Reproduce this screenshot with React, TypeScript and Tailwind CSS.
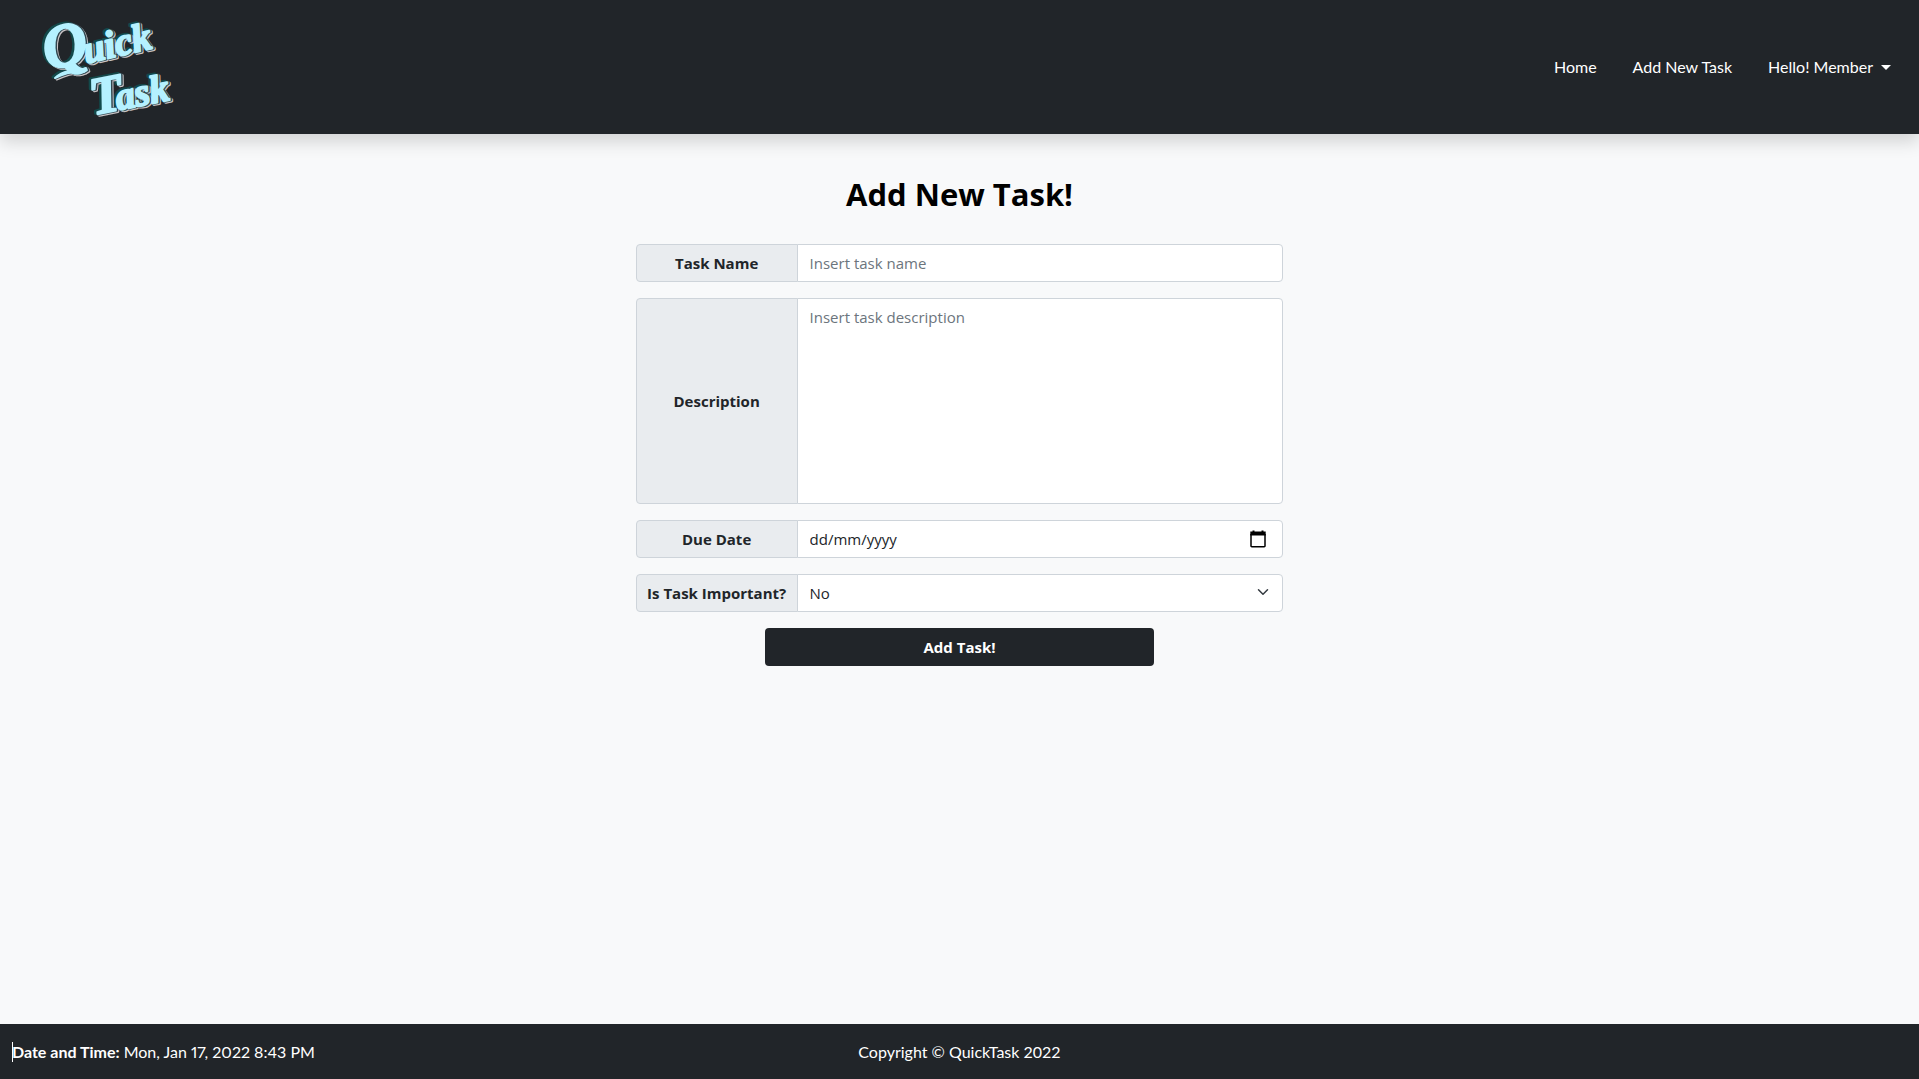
import type { ReactNode } from "react";
import { useState } from "react";

const controlClass =
  "min-w-0 flex-1 rounded-r border border-[#ced4da] bg-white px-3 text-[#212529] outline-none focus:border-[#86b7fe]";

function Logo() {
  const layers = [
    { dx: -2, dy: -1, fill: "#12494a", stroke: "#12494a", width: 3 },
    { dx: 2, dy: 1, fill: "#c9c4c6", stroke: "#c9c4c6", width: 3 },
    { dx: 1, dy: 0, fill: "#31464f", stroke: "#31464f", width: 3 },
    { dx: 0, dy: 0, fill: "#b5f1ff", stroke: "#b5f1ff", width: 2 },
  ];
  return (
    <svg width="160" height="134" viewBox="0 0 160 134" role="img" aria-label="Quick Task">
      {layers.map((l) => (
        <g
          key={`${l.dx}${l.dy}`}
          transform={`translate(${l.dx} ${l.dy})`}
          fill={l.fill}
          stroke={l.stroke}
          strokeWidth={l.width}
          strokeLinejoin="round"
          strokeLinecap="round"
          fontFamily="'Liberation Serif', serif"
          fontStyle="italic"
          fontWeight="700"
        >
          <g transform="rotate(-13 30 72)">
            <text x="24" y="69" fontSize="62">Q</text>
            <text x="63" y="71" fontSize="39">uick</text>
          </g>
          <path d="M31 78 C38 71 50 68 60 72 C51 71 41 73 31 78 Z" />
          <g transform="rotate(-11 69 114)">
            <text x="69" y="115" fontSize="53">T</text>
            <text x="94" y="115" fontSize="39">ask</text>
          </g>
        </g>
      ))}
    </svg>
  );
}

function Field({ label, id, children }: { label: string; id: string; children: ReactNode }) {
  return (
    <div className="flex">
      <label
        htmlFor={id}
        className="-mr-px flex w-1/4 shrink-0 items-center justify-center whitespace-nowrap rounded-l border border-[#ced4da] bg-[#e9ecef] font-bold text-[#212529]"
      >
        {label}
      </label>
      {children}
    </div>
  );
}

export default function App() {
  const [important, setImportant] = useState("No");
  return (
    <div className="flex min-h-screen flex-col bg-[#f8f9fa] font-['Open_Sans',sans-serif] text-[15px] leading-6">
      <header className="flex items-center justify-between bg-[#212529] pl-6 pr-7 shadow-[0_8px_16px_rgba(0,0,0,0.15)]">
        <a href="#home">
          <Logo />
        </a>
        <nav className="flex items-center gap-9 font-['Lato',sans-serif] text-base text-white">
          <a href="#home">Home</a>
          <a href="#add">Add New Task</a>
          <button type="button" className="flex items-center gap-2">
            Hello! Member
            <span className="border-x-5 border-t-5 border-x-transparent border-t-white" />
          </button>
        </nav>
      </header>

      <main className="flex flex-1 flex-col items-center pt-10">
        <h1 className="mb-[30px] text-[31px] font-bold leading-10 text-black">Add New Task!</h1>
        <form
          className="flex w-[calc((100%+24px)/3)] flex-col gap-4"
          onSubmit={(e) => e.preventDefault()}
        >
          <Field label="Task Name" id="name">
            <input
              id="name"
              type="text"
              placeholder="Insert task name"
              className={`h-[38px] placeholder:text-[#6c757d] ${controlClass}`}
            />
          </Field>
          <Field label="Description" id="description">
            <textarea
              id="description"
              placeholder="Insert task description"
              className={`block h-[206px] resize-none py-1.5 placeholder:text-[#6c757d] ${controlClass}`}
            />
          </Field>
          <Field label="Due Date" id="due">
            <div className="relative flex flex-1">
              <input
                id="due"
                type="text"
                inputMode="numeric"
                placeholder="dd/mm/yyyy"
                className={`h-[38px] placeholder:text-[#212529] ${controlClass}`}
              />
              <button type="button" aria-label="Open calendar" className="absolute right-4 top-[9px]">
                <svg width="18" height="20" viewBox="0 0 18 20" fill="none" stroke="#000">
                  <path d="M2 5V17a.8.8 0 0 0 .8.8h12.4a.8.8 0 0 0 .8-.8V5" strokeWidth="1.500" />
                  <path d="M1.300 4.500h15.400" strokeWidth="4" />
                  <path d="M4.500 1.500v3M13.500 1.500v3" strokeWidth="2" />
                </svg>
              </button>
            </div>
          </Field>
          <Field label="Is Task Important?" id="important">
            <div className="relative flex flex-1">
              <select
                id="important"
                value={important}
                onChange={(e) => setImportant(e.target.value)}
                className={`h-[38px] appearance-none ${controlClass}`}
              >
                <option>No</option>
                <option>Yes</option>
              </select>
              <svg
                className="pointer-events-none absolute right-3 top-3"
                width="16"
                height="12"
                viewBox="0 0 16 16"
                fill="none"
                stroke="#343a40"
                strokeWidth="2"
                strokeLinecap="round"
                strokeLinejoin="round"
              >
                <path d="M2 5l6 6 6-6" />
              </svg>
            </div>
          </Field>
          <button
            type="submit"
            className="h-[38px] w-3/5 self-center rounded bg-[#212529] font-bold text-white"
          >
            Add Task!
          </button>
        </form>
      </main>

      <footer className="grid h-[55px] grid-cols-3 items-center bg-[#212529] px-3 font-['Lato',sans-serif] text-base text-white">
        <div className="flex items-center">
          <span className="-mr-px h-5 w-px bg-white" />
          <p className="proportional-nums">
            <b>Date and Time:</b> Mon, Jan 17, 2022 8:43 PM
          </p>
        </div>
        <p className="text-center">Copyright © QuickTask 2022</p>
      </footer>
    </div>
  );
}
